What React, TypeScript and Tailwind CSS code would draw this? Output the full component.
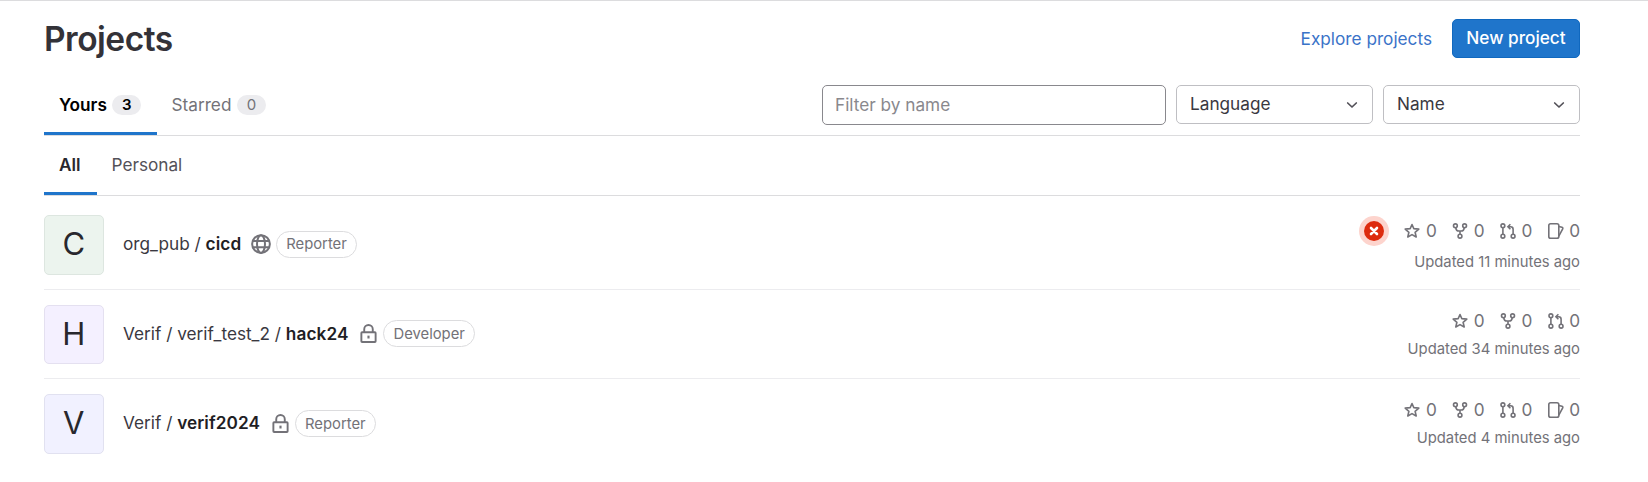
import type { ReactNode } from "react";

function Icon({ size = 16, children }: { size?: number; children: ReactNode }) {
  return (
    <svg width={size} height={size} viewBox="0 0 16 16" fill="none" stroke="currentColor" strokeWidth="1.6" className="shrink-0">
      {children}
    </svg>
  );
}

const Star = () => (
  <Icon>
    <path d="M8 1.5 L9.8 5.6 L14.8 6.1 L11.1 9.3 L12.2 14 L8 11.6 L3.8 14 L4.9 9.3 L1.2 6.1 L6.2 5.6 Z" strokeLinejoin="round" />
  </Icon>
);

const Fork = () => (
  <Icon>
    <circle cx="3.4" cy="2.8" r="1.9" />
    <circle cx="12.6" cy="2.8" r="1.9" />
    <circle cx="8" cy="13.2" r="1.9" />
    <path d="M3.8 4.8C4 6.4 5.2 8 6.8 8H9.2C10.8 8 12 6.4 12.2 4.8M8 8V11.2" />
  </Icon>
);

const MergeRequest = () => (
  <Icon>
    <circle cx="2.9" cy="2.8" r="1.9" />
    <circle cx="2.9" cy="13.2" r="1.9" />
    <circle cx="13.1" cy="13.2" r="1.9" />
    <path d="M2.9 4.8V11.2M13.1 11.2V6.2A2.5 2.5 0 0 0 10.6 3.7H8.3M10.4 1.2L7.9 3.7L10.4 6.2" />
  </Icon>
);

const Issues = () => (
  <Icon>
    <rect x=".8" y=".8" width="10" height="14.4" rx="1.8" />
    <path d="M10.8 3.4L14 4.3Q15.2 4.7 14.7 5.9L10.8 13.2" />
  </Icon>
);

const Globe = () => (
  <Icon size={20}>
    <circle cx="8" cy="8" r="7.1" />
    <ellipse cx="8" cy="8" rx="3.2" ry="7.1" />
    <path d="M1.3 5.5H14.7M1.3 10.5H14.7" />
  </Icon>
);

const Lock = () => (
  <Icon size={19}>
    <rect x="2" y="7" width="12" height="8.1" rx=".6" />
    <path d="M4.4 7V4.4A3.6 3.6 0 0 1 11.6 4.4V7" />
    <path d="M8 9.8V12.2" strokeWidth="1.8" />
  </Icon>
);

const Chevron = () => (
  <Icon>
    <path d="M3.7 6L8 10L12.3 6" strokeWidth="1.7" strokeLinecap="round" strokeLinejoin="round" />
  </Icon>
);

function Stat({ icon }: { icon: ReactNode }) {
  return (
    <div className="flex items-center gap-[5.5px]">
      {icon}
      <span className="flex w-[11px] justify-end text-[17.22px] leading-5">0</span>
    </div>
  );
}

function Select({ label }: { label: string }) {
  return (
    <button className="flex h-[39px] w-[197px] items-center justify-between rounded-[5px] border border-[#bfbfc3] pr-3 pl-[13px] text-[#3a383f]">
      <span className="-mt-0.5 leading-5">{label}</span>
      <span className="text-[#535158]"><Chevron /></span>
    </button>
  );
}

type Project = {
  initial: string;
  tint: string;
  path: string;
  name: string;
  isPublic?: boolean;
  role: string;
  failed?: boolean;
  issues?: boolean;
  updated: string;
};

const projects: Project[] = [
  { initial: "C", tint: "bg-[#ecf4ee] border-[#dde6e0]", path: "org_pub / ", name: "cicd", isPublic: true, role: "Reporter", failed: true, issues: true, updated: "Updated 11 minutes ago" },
  { initial: "H", tint: "bg-[#f4f0ff] border-[#e4e0f0]", path: "Verif / verif_test_2 / ", name: "hack24", role: "Developer", updated: "Updated 34 minutes ago" },
  { initial: "V", tint: "bg-[#f1f1ff] border-[#e1e1f0]", path: "Verif / ", name: "verif2024", role: "Reporter", issues: true, updated: "Updated 4 minutes ago" },
];

function Row({ project: p }: { project: Project }) {
  return (
    <li className="flex h-[89.6px] items-start border-b border-[#ececef] pt-[15px] last:border-b-0">
      <div className={"flex size-[59.5px] shrink-0 items-center justify-center rounded-[5px] border text-[31px] leading-none text-[#28272d] " + p.tint}>
        <span className="-mt-0.5">{p.initial}</span>
      </div>
      <div className="ml-[19.5px] flex h-[58px] items-center whitespace-nowrap text-[#737278]">
        <span className="whitespace-pre leading-6 text-[#3a383f]">
          {p.path}
          <b className="font-semibold tracking-[0.08px] text-[#1f1e24]">{p.name}</b>
        </span>
        <span className={p.isPublic ? "ml-[9.5px]" : "ml-[10.5px]"}>{p.isPublic ? <Globe /> : <Lock />}</span>
        <span className={(p.isPublic ? "ml-[5px]" : "ml-[5px]") + " flex h-[27px] items-center rounded-full border border-[#dcdcde] px-[9.5px] pt-px text-[14.8px]"}>{p.role}</span>
      </div>
      <div className="ml-auto flex flex-col items-end text-[#737278]">
        <div className={p.failed ? "flex h-[31px] items-center gap-[15.2px]" : "flex h-8 items-center gap-[15.2px]"}>
          {p.failed && (
            <span className="flex size-[30px] items-center justify-center rounded-full bg-[#fdd4cd]">
              <span className="flex size-5 items-center justify-center rounded-full bg-[#dd2b0e] text-white">
                <svg width="10" height="10" viewBox="0 0 10 10" stroke="currentColor" strokeWidth="2.6" strokeLinecap="round">
                  <path d="M2 2L8 8M8 2L2 8" />
                </svg>
              </span>
            </span>
          )}
          <Stat icon={<Star />} />
          <Stat icon={<Fork />} />
          <Stat icon={<MergeRequest />} />
          {p.issues && <Stat icon={<Issues />} />}
        </div>
        <span className={p.failed ? "mt-1.5 text-[14.8px] leading-5" : "mt-0.5 text-[14.8px] leading-5"}>{p.updated}</span>
      </div>
    </li>
  );
}

export default function App() {
  return (
    <main className="h-[482px] border-t border-[#dcdcde] bg-white pr-[68px] pl-[44px] font-[Inter,sans-serif] text-[17.22px]">
      <header className="flex h-[75px] items-center justify-between">
        <h1 className="text-[33.5px] leading-10 font-semibold tracking-[-0.5px] text-[#333238]">Projects</h1>
        <div className="flex items-center gap-5">
          <a className="text-[#3a73c8]">Explore projects</a>
          <button className="flex h-[39px] w-32 items-center justify-center rounded-[5px] border border-[#1068bf] bg-[#1f75cb] pb-px font-medium text-white">New project</button>
        </div>
      </header>
      <nav className="flex h-[60px] items-start justify-between border-b border-[#dcdcde]">
        <div className="flex h-[59px] text-[#737278]">
          <div className="flex w-[112.5px] items-center gap-[5.5px] border-b-[3px] border-[#1f75cb] pt-0.5 pl-[15px] font-semibold text-black">
            Yours
            <span className="flex h-5 w-[29px] items-center justify-center rounded-full bg-[#ececef] text-[15px]">3</span>
          </div>
          <div className="flex items-center gap-[5.5px] border-b-[3px] border-transparent pt-0.5 pl-[15px]">
            Starred
            <span className="flex h-5 w-[29px] items-center justify-center rounded-full bg-[#ececef] text-[15px]">0</span>
          </div>
        </div>
        <div className="flex gap-[10px] pt-[9px]">
          <div className="flex h-10 w-[344px] items-center rounded-[5px] border border-[#89888d] pl-3 text-[#89888d]">Filter by name</div>
          <Select label="Language" />
          <Select label="Name" />
        </div>
      </nav>
      <nav className="flex h-[60px] border-b border-[#dcdcde] text-[#535158]">
        <div className="flex w-[52.5px] items-center border-b-[3px] border-[#1f75cb] pt-0.5 pl-[15px] font-semibold text-[#28272d]">All</div>
        <div className="flex items-center border-b-[3px] border-transparent pt-0.5 pl-[15px]">Personal</div>
      </nav>
      <ul className="pt-1">
        {projects.map((p) => <Row key={p.name} project={p} />)}
      </ul>
    </main>
  );
}
